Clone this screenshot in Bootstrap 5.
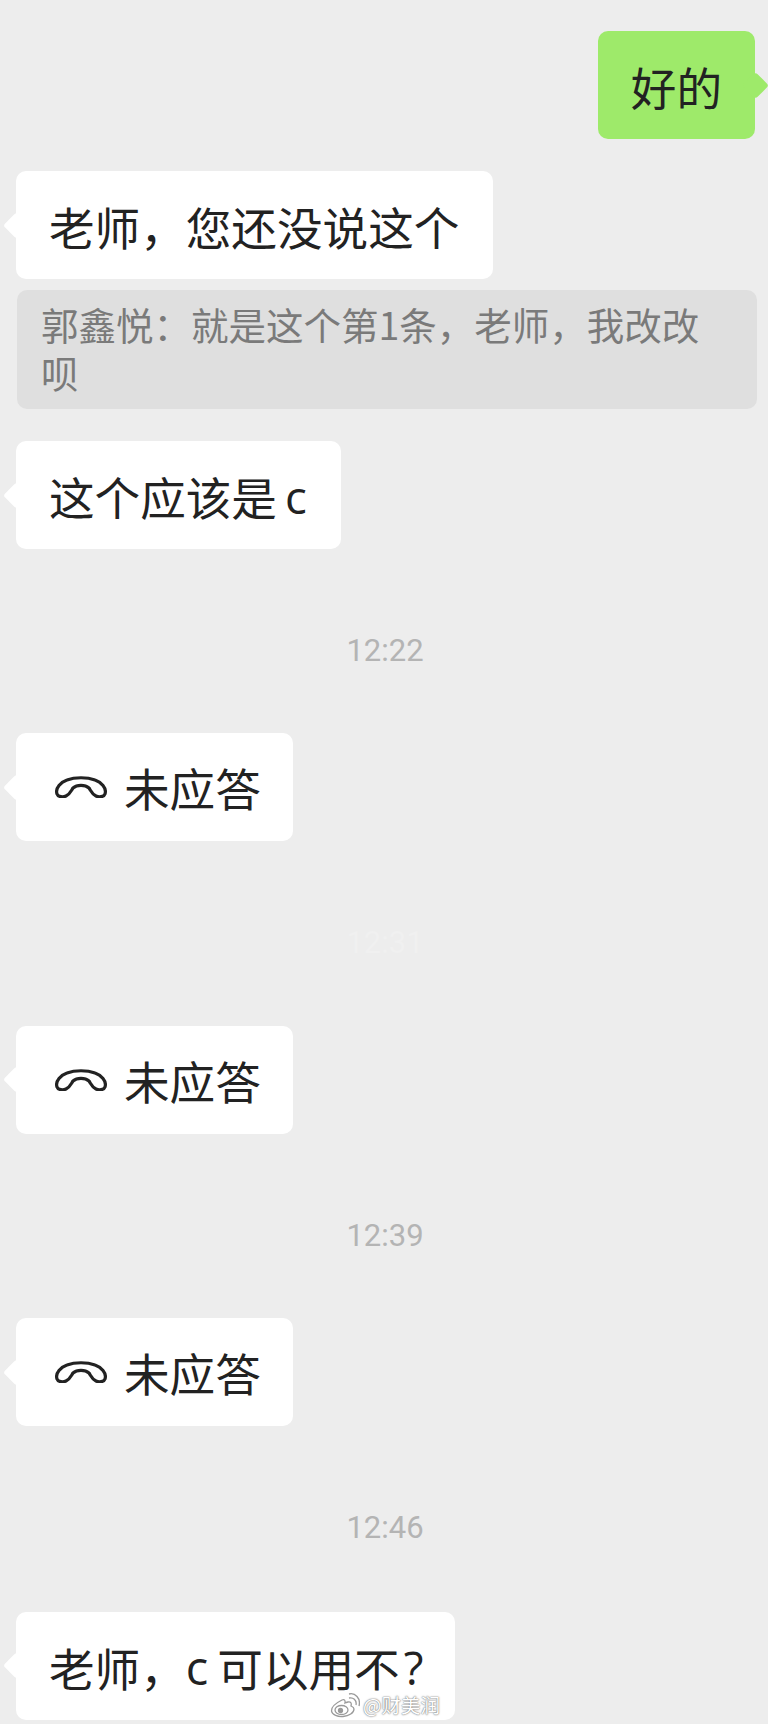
<!doctype html>
<html lang="zh">
<head>
<meta charset="utf-8">
<title>聊天记录</title>
<link rel="stylesheet" href="https://cdn.jsdelivr.net/npm/bootstrap@5.3.0/dist/css/bootstrap.min.css">
<style>
html,body{height:100%}
body{background:#ededed;font-family:"Noto Sans CJK SC","Liberation Sans",sans-serif;color:#222;overflow:hidden}
.chat-page{position:relative;width:768px;height:1724px;padding:31px 11px 0 16px}
.bubble{position:relative;height:108px;border-radius:10px;font-size:45.6px;line-height:50px;padding-top:2px;padding-left:33px;padding-right:34px;white-space:nowrap}
.bubble::before{content:"";position:absolute;top:50%;width:19px;height:19px;margin-top:-9.5px;background:inherit;border-radius:3px;transform:rotate(45deg)}
.bubble-in{background:#fff}
.bubble-in::before{left:-9.5px}
.bubble-out{background:#9eea6a;margin-right:2px;padding-left:32.500px;padding-right:33px}
.bubble-out::before{right:-9.5px}
.gap-msg{margin-top:32px}
.quote-box{margin:11px 0 0 1px;background:#dfdfdf;border-radius:10px;color:#7a7a7a;font-size:37.5px;line-height:48px;padding:10px 24px 13px 24px;height:119px;white-space:nowrap}
.time-row{height:184.500px;padding-top:82px;padding-right:3px;font-family:"Roboto","Liberation Sans",sans-serif;font-size:31px;color:#b4b4b4;line-height:40px}
.time-first{height:184px}
.time-last{height:185.500px}
.time-faint{color:#f0f0f0}
.hangup{width:52px;height:22px;margin-left:39px;margin-right:17px;flex:none}
.bubble.call-bubble{padding-top:0;padding-right:32px}
.bubble.ask-bubble{padding-right:32px}
.latin-c{font-family:"Open Sans","Liberation Sans",sans-serif}
.latin-mark{margin-right:9px;font-size:47px}
.mark-wb{position:absolute;left:330px;top:1691px;color:#fff;font-size:19.500px;line-height:28px;text-shadow:0 0 2px #777,0 0 1px #777}
.mark-wb svg{width:30px;height:26px;margin-right:3px}
</style>
</head>
<body>
<main class="chat-page">
  <div class="d-flex justify-content-end">
    <div class="bubble bubble-out d-flex align-items-center">好的</div>
  </div>
  <div class="d-flex gap-msg">
    <div class="bubble bubble-in d-flex align-items-center">老师，您还没说这个</div>
  </div>
  <div class="quote-box">郭鑫悦：就是这个第1条，老师，我改改<br>呗</div>
  <div class="d-flex gap-msg">
    <div class="bubble bubble-in d-flex align-items-center">这个应该是<span class="latin-c ms-2">c</span></div>
  </div>
  <div class="time-row time-first text-center">12:22</div>
  <div class="d-flex">
    <div class="bubble bubble-in call-bubble d-flex align-items-center ps-0">
      <svg class="hangup" viewBox="0 0 52 22" fill="none" stroke="#222" stroke-width="3.200" stroke-linejoin="round"><path d="M2 18C0 12 6 6 12 4C20 1 32 1 40 4C46 6 52 12 50 18C49 21 44 21.500 41 20C37 18 36 15 34 12C30 8.500 22 8.500 18 12C16 15 15 18 11 20C8 21.500 3 21 2 18Z"/></svg>未应答
    </div>
  </div>
  <div class="time-row time-faint text-center">12:31</div>
  <div class="d-flex">
    <div class="bubble bubble-in call-bubble d-flex align-items-center ps-0">
      <svg class="hangup" viewBox="0 0 52 22" fill="none" stroke="#222" stroke-width="3.200" stroke-linejoin="round"><path d="M2 18C0 12 6 6 12 4C20 1 32 1 40 4C46 6 52 12 50 18C49 21 44 21.500 41 20C37 18 36 15 34 12C30 8.500 22 8.500 18 12C16 15 15 18 11 20C8 21.500 3 21 2 18Z"/></svg>未应答
    </div>
  </div>
  <div class="time-row text-center">12:39</div>
  <div class="d-flex">
    <div class="bubble bubble-in call-bubble d-flex align-items-center ps-0">
      <svg class="hangup" viewBox="0 0 52 22" fill="none" stroke="#222" stroke-width="3.200" stroke-linejoin="round"><path d="M2 18C0 12 6 6 12 4C20 1 32 1 40 4C46 6 52 12 50 18C49 21 44 21.500 41 20C37 18 36 15 34 12C30 8.500 22 8.500 18 12C16 15 15 18 11 20C8 21.500 3 21 2 18Z"/></svg>未应答
    </div>
  </div>
  <div class="time-row time-last text-center">12:46</div>
  <div class="d-flex">
    <div class="bubble bubble-in ask-bubble d-flex align-items-center">老师，<span class="latin-c latin-mark">c</span>可以用不<span class="latin-c ms-1">?</span></div>
  </div>
  <div class="mark-wb d-flex align-items-center">
    <svg viewBox="0 0 30 26" fill="none" stroke="#9a9a9a" stroke-width="1.300"><path d="M12 8C6 11 1 15 1.500 19C2 23 8 25 13 24.500C19 24 24 21 24 17C24 15 22 14.500 21 14C22 11 20.500 9.500 18 10C16 10.500 15 11 15 11C15.500 8.500 14.500 7 12 8Z" fill="#fff"/><ellipse cx="11.500" cy="18" rx="6.500" ry="4.500"/><circle cx="10.500" cy="18.500" r="2" fill="#9a9a9a"/><path d="M19 6C23 5 27 8 26 13M19 2C25 .5 31 6 29 14"/></svg>
    <span>@财美润</span>
  </div>
</main>
<script src="https://cdn.jsdelivr.net/npm/bootstrap@5.3.0/dist/js/bootstrap.bundle.min.js"></script>
</body>
</html>
